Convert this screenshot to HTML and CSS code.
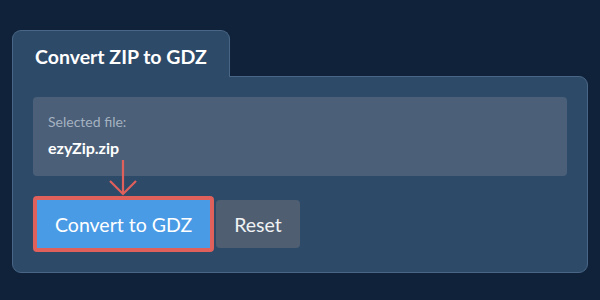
FILE: index.html
```html
<!DOCTYPE html>
<html>
<head>
<meta charset="utf-8">
<link rel="stylesheet" href="styles.css">
</head>
<body>
<div class="wrap">
  <div class="tab">Convert ZIP to GDZ</div>
  <div class="panel">
    <div class="filebox">
      <div class="label">Selected file:</div>
      <div class="filename">ezyZip.zip</div>
    </div>
    <div class="actions">
      <div class="highlight">
        <svg class="arrow" width="30" height="38" viewBox="0 0 30 38">
          <path d="M15 1 V35 M2 22 L15 35 L28 22" fill="none" stroke="#e0605b" stroke-width="2.2"/>
        </svg>
        <button class="btn primary">Convert to GDZ</button>
      </div>
      <button class="btn secondary">Reset</button>
    </div>
  </div>
</div>
</body>
</html>
```
FILE: styles.css
```css
html, body {
  margin: 0;
  padding: 0;
  background: #0f2239;
  font-family: Lato, "Open Sans", sans-serif;
}
.wrap {
  padding: 30px 12px 0 12px;
}
.tab {
  display: inline-block;
  position: relative;
  z-index: 1;
  box-sizing: border-box;
  height: 47px;
  margin-bottom: -1px;
  padding: 14px 22px 0 22px;
  background: #2d4a69;
  border: 1px solid #4a6686;
  border-bottom: none;
  border-radius: 9px 9px 0 0;
  color: #ffffff;
  font-weight: 700;
  font-size: 19.5px;
  line-height: 24px;
}
.panel {
  background: #2d4a69;
  border: 1px solid #4a6686;
  border-radius: 0 9px 9px 9px;
  padding: 20px;
}
.filebox {
  background: #4b5f78;
  border-radius: 4px;
  padding: 15px 15px 17px 15px;
}
.label {
  color: #a5b2c1;
  font-size: 14px;
  line-height: 20px;
}
.filename {
  margin-top: 5px;
  color: #ffffff;
  font-weight: 700;
  font-size: 16px;
  line-height: 22px;
}
.actions {
  display: flex;
  align-items: center;
  gap: 2px;
  margin-top: 20px;
}
.highlight {
  position: relative;
  display: flex;
  border: 4px solid #e0605b;
  border-radius: 4px;
}
.arrow {
  position: absolute;
  left: 71px;
  top: -41px;
}
.btn {
  height: 48px;
  border: none;
  margin: 0;
  font-family: Lato, "Open Sans", sans-serif;
  font-size: 19.5px;
  color: #ffffff;
  cursor: pointer;
}
.primary {
  background: #4a9be6;
  padding: 0 18px;
  border-radius: 0;
}
.secondary {
  background: #4f5f71;
  color: #f0f2f4;
  padding: 0 18px;
  border-radius: 4px;
}
```
